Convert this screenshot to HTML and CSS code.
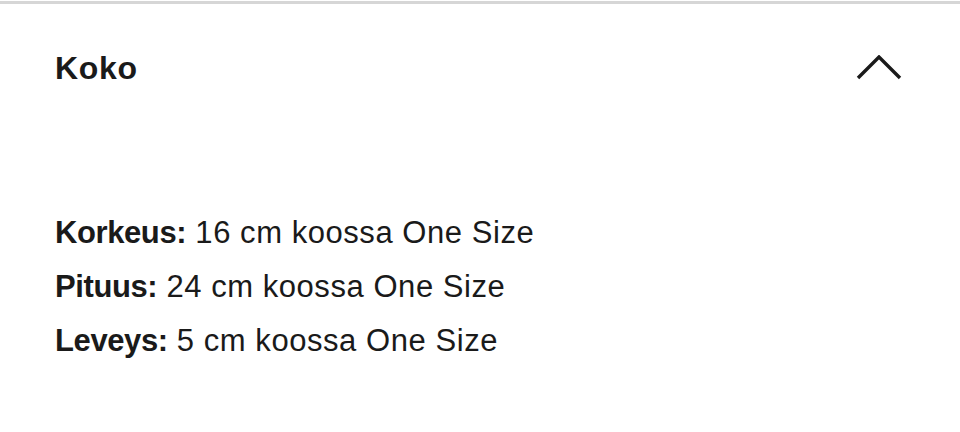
FILE: index.html
```html
<!DOCTYPE html>
<html lang="fi">
<head>
<meta charset="utf-8">
<link rel="stylesheet" href="styles.css">
</head>
<body>
<section class="accordion">
  <div class="accordion-header">
    <h2 class="title">Koko</h2>
    <svg class="chevron" width="46" height="26" viewBox="0 0 46 26" aria-hidden="true">
      <polyline points="2,23 23,2 44,23" fill="none" stroke="#1a1a1a" stroke-width="3.4"/>
    </svg>
  </div>
  <ul class="sizes">
    <li><strong>Korkeus:</strong> 16 cm koossa One Size</li>
    <li><strong>Pituus:</strong> 24 cm koossa One Size</li>
    <li><strong>Leveys:</strong> 5 cm koossa One Size</li>
  </ul>
</section>
</body>
</html>
```

FILE: styles.css
```css
html, body {
  margin: 0;
  padding: 0;
  background: #ffffff;
}

body {
  font-family: "Liberation Sans", Arial, sans-serif;
  color: #1a1a1a;
}

.accordion {
  border-top: 3px solid #d6d6d6;
  margin-top: 1px;
  padding: 44px 58px 0 55px;
}

.accordion-header {
  display: flex;
  justify-content: space-between;
  align-items: center;
  height: 40px;
}

.title {
  margin: 0;
  font-size: 32px;
  line-height: 40px;
  font-weight: 700;
  letter-spacing: 0.7px;
}

.chevron {
  display: block;
  margin-top: 0;
}

.sizes {
  list-style: none;
  margin: 118px 0 0 0;
  padding: 0;
}

.sizes li {
  font-size: 31px;
  line-height: 54px;
  letter-spacing: 0.55px;
}

.sizes strong {
  font-weight: 700;
  letter-spacing: -0.4px;
}
```
